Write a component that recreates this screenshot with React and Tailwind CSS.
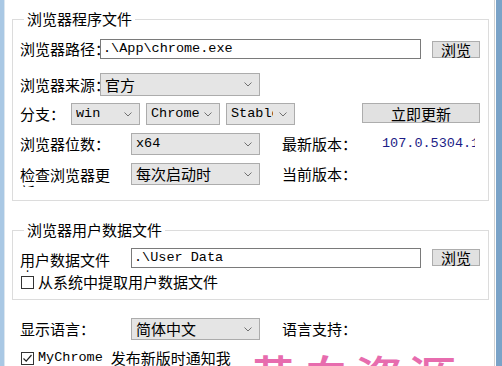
import React from "react";

const mono = "font-['Liberation_Mono','Noto_Sans_CJK_SC',monospace]";

function Chevron() {
  return (
    <svg width="8" height="5" viewBox="0 0 8 5" className="shrink-0">
      <polyline points="0.5,0.5 4,4 7.5,0.5" fill="none" stroke="#707070" strokeWidth="1" />
    </svg>
  );
}

function Select({ className, textClass = "", children, isMono }) {
  return (
    <div className={`flex items-center h-[22px] border border-[#acacac] bg-[#e5e5e5] ${className}`}>
      <div className="flex-1 pl-[4px]">
        <div
          className={`overflow-hidden whitespace-nowrap ${
            isMono ? `${mono} text-[13.5px]` : "text-[15px]"
          } ${textClass}`}
        >
          {children}
        </div>
      </div>
      <div className="w-[19px] flex justify-center pr-[3px]">
        <Chevron />
      </div>
    </div>
  );
}

function Input({ className, children }) {
  return (
    <div
      className={`flex items-center h-[20px] border border-[#7a7a7a] bg-white pl-[2px] whitespace-nowrap overflow-hidden ${mono} text-[13.5px] ${className}`}
    >
      {children}
    </div>
  );
}

function Button({ className, children }) {
  return (
    <div
      className={`flex items-center justify-center border border-[#adadad] bg-[#e1e1e1] text-[15px] leading-none ${className}`}
    >
      {children}
    </div>
  );
}

function Checkbox({ checked }) {
  return (
    <div className="w-[13px] h-[13px] border border-[#333] bg-white flex items-center justify-center shrink-0">
      {checked && (
        <svg width="11" height="11" viewBox="0 0 11 11">
          <polyline points="1.5,5.5 4.2,8.2 9.5,2" fill="none" stroke="#222" strokeWidth="1.2" />
        </svg>
      )}
    </div>
  );
}

export default function App() {
  return (
    <div className="w-[502px] h-[366px] overflow-hidden flex bg-white text-black font-['Noto_Sans_CJK_SC',sans-serif] leading-[20px]">
      {/* window edge left */}
      <div className="w-[5px] bg-[#a9c8e4] border-r border-[#dce6ef]" />

      <div className="relative flex-1 flex flex-col">
        {/* group 1 */}
        <fieldset className="ml-[7px] mr-[5px] mt-[9px] border border-[#dcdcdc] pl-[7px] pr-[8px] pb-[15px]">
          <legend className="ml-[4px] px-[3px] text-[15px] leading-[20px]">浏览器程序文件</legend>
          <div className="text-[15px] flex flex-col">
            <div className="flex items-center h-[20px] mt-[10px]">
              <div className="w-[80px] overflow-hidden whitespace-nowrap">浏览器路径：</div>
              <Input className="w-[321px]">.\App\chrome.exe</Input>
              <Button className="ml-[11px] w-[48px] h-[17px]">浏览</Button>
            </div>

            <div className="flex items-center h-[23px] mt-[14px]">
              <div className="w-[80px] overflow-hidden whitespace-nowrap">浏览器来源：</div>
              <Select className="w-[160px] h-[23px]">官方</Select>
            </div>

            <div className="flex items-center h-[22px] mt-[7px]">
              <div className="w-[51px] whitespace-nowrap">分支：</div>
              <Select className="w-[69px]" isMono>win</Select>
              <Select className="ml-[6px] w-[74px]" isMono>Chrome</Select>
              <Select className="ml-[6px] w-[69px]" textClass="w-[42px]" isMono>Stable</Select>
              <Button className="ml-auto w-[118px] h-[20px] self-start">立即更新</Button>
            </div>

            <div className="flex items-center h-[22px] mt-[8px]">
              <div className="w-[111px] whitespace-nowrap">浏览器位数：</div>
              <Select className="w-[129px]" isMono>x64</Select>
              <div className="ml-[22px] w-[100px] whitespace-nowrap">最新版本：</div>
              <div className={`w-[93px] overflow-hidden whitespace-nowrap text-[#1c1c86] ${mono} text-[13.5px]`}>
                107.0.5304.122
              </div>
            </div>

            <div className="flex items-start h-[22px] mt-[8px]">
              <div className="w-[96px] mr-[15px] mt-[3px] h-[21px] overflow-hidden leading-[17px]">检查浏览器更新</div>
              <Select className="w-[129px]">每次启动时</Select>
              <div className="ml-[22px] self-center whitespace-nowrap">当前版本：</div>
            </div>
          </div>
        </fieldset>

        {/* group 2 */}
        <fieldset className="ml-[7px] mr-[5px] mt-[19px] border border-[#dcdcdc] pl-[7px] pr-[8px] pb-[8px]">
          <legend className="ml-[4px] px-[3px] text-[15px] leading-[20px]">浏览器用户数据文件</legend>
          <div className="text-[15px] flex flex-col">
            <div className="flex items-start h-[20px] mt-[8px]">
              <div className="w-[96px] mr-[15px] mt-[3px] h-[21px] overflow-hidden leading-[17px]">用户数据文件夹</div>
              <Input className="w-[290px]">.\User Data</Input>
              <Button className="ml-[11px] mt-[1px] w-[48px] h-[17px]">浏览</Button>
            </div>
            <div className="flex items-center h-[18px] mt-[5px] gap-[4px] pl-[1px]">
              <Checkbox />
              <span>从系统中提取用户数据文件</span>
            </div>
          </div>
        </fieldset>

        <div className="pl-[15px] text-[15px] flex flex-col">
          <div className="flex items-center h-[22px] mt-[18px]">
            <div className="w-[111px] whitespace-nowrap">显示语言：</div>
            <Select className="w-[129px]">简体中文</Select>
            <div className="ml-[22px] whitespace-nowrap">语言支持：</div>
          </div>
          <div className="flex items-center h-[18px] mt-[9px] gap-[4px] pl-[1px] whitespace-nowrap">
            <Checkbox checked />
            <span className={`${mono} text-[13.5px]`}>MyChrome</span>
            <span className="ml-[4px]">发布新版时通知我</span>
          </div>
        </div>

        {/* watermark */}
        <div className="absolute left-[244px] top-[347px] text-[48px] leading-[56px] tracking-[5px] font-medium text-[#e2489b] opacity-80 whitespace-nowrap pointer-events-none">
          黄白资源
        </div>
      </div>

      {/* window edge right */}
      <div className="w-[1px] bg-[#d2d2d2]" />
      <div className="w-[1px] bg-white" />
      <div className="w-[6px] bg-[#7aa3c8]" />
    </div>
  );
}
